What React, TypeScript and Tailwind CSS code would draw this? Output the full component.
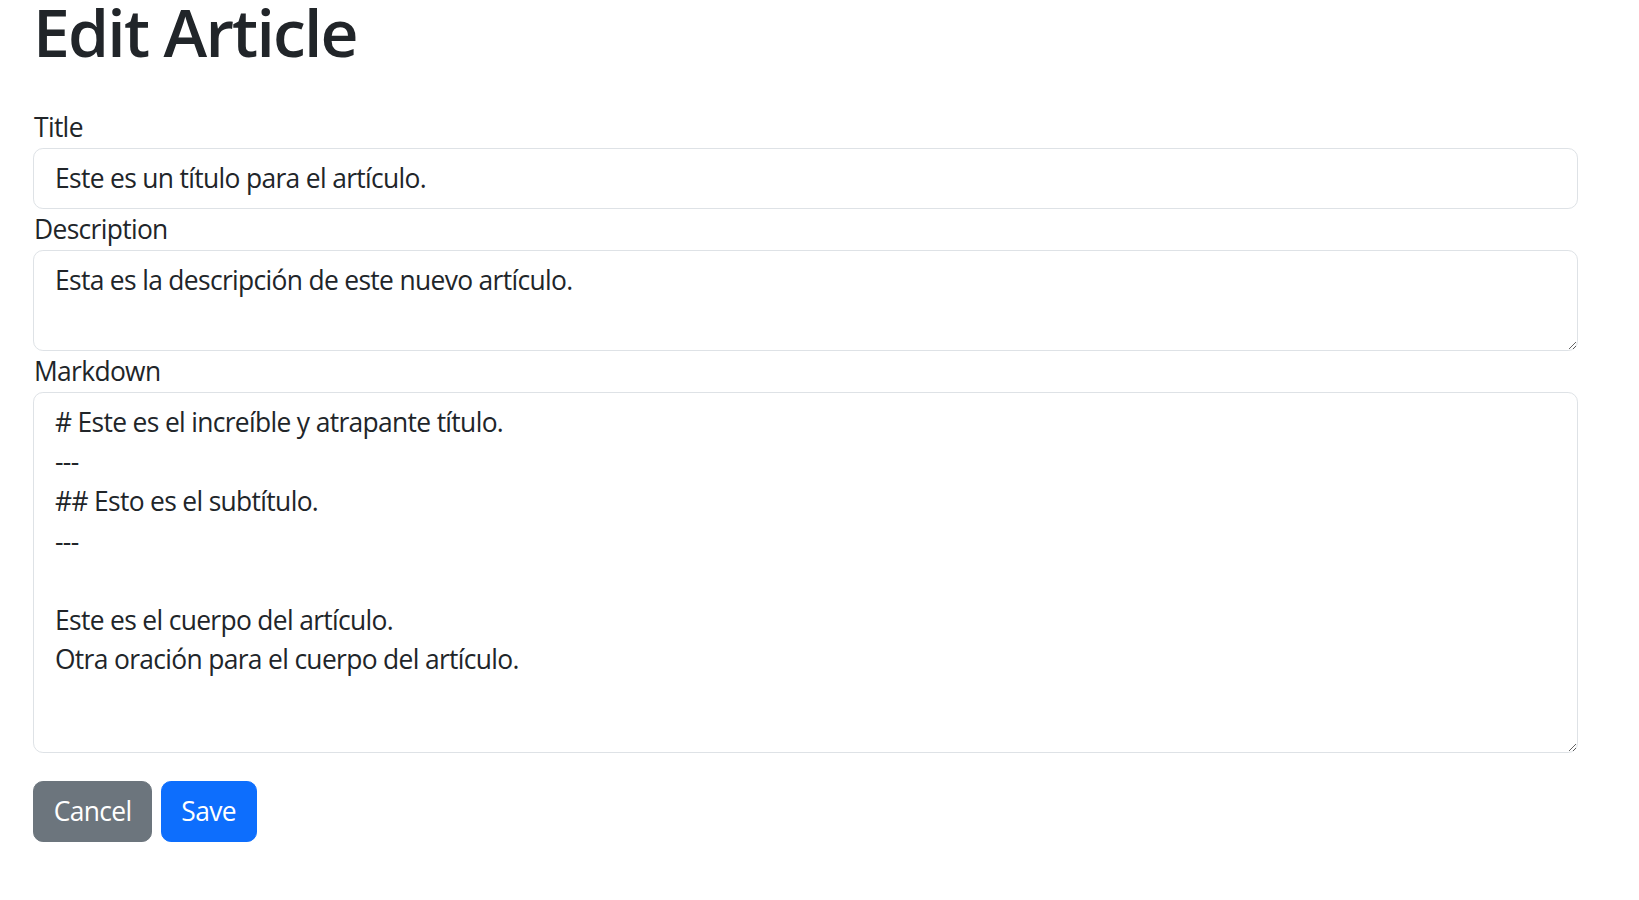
import React from "react";

const markdown = `# Este es el increíble y atrapante título.
---
## Esto es el subtítulo.
---

Este es el cuerpo del artículo.
Otra oración para el cuerpo del artículo.`;

const fieldClass =
  "block w-full border border-[#dee2e6] rounded-[9.9px] bg-white pl-[21px] pr-[19.8px] py-[9.9px] text-[26.4px] leading-[39.6px] tracking-[-0.66px] text-[#212529] outline-none";

const labelClass =
  "block pl-[1px] text-[26.4px] leading-[40.8px] tracking-[-0.66px]";

const btnClass =
  "h-[61.3px] rounded-[9.9px] border px-[19.8px] text-[26.4px] leading-[39.6px] tracking-[-0.66px] text-white";

const EditArticle = () => {
  return (
    <div
      className="min-h-screen bg-white text-[#212529]"
      style={{ fontFamily: '"Open Sans", "Noto Sans", sans-serif' }}
    >
      <div className="ml-[33px] w-[1545px]">
        <h1 className="mb-[44.9px] text-[66px] leading-[62px] font-semibold tracking-[-1.8px]">
          Edit Article
        </h1>
        <form onSubmit={(e) => e.preventDefault()}>
          <label className={labelClass}>Title</label>
          <input
            className={fieldClass + " h-[61.6px]"}
            defaultValue="Este es un título para el artículo."
          />
          <label className={labelClass}>Description</label>
          <textarea
            className={fieldClass + " h-[101px]"}
            defaultValue="Esta es la descripción de este nuevo artículo."
          />
          <label className={labelClass}>Markdown</label>
          <textarea
            className={fieldClass + " h-[361px]"}
            defaultValue={markdown}
          />
          <div className="mt-[28.1px] flex gap-[8.3px]">
            <button
              type="button"
              className={btnClass + " border-[#6c757d] bg-[#6c757d]"}
            >
              Cancel
            </button>
            <button
              type="submit"
              className={btnClass + " border-[#0d6efd] bg-[#0d6efd]"}
            >
              Save
            </button>
          </div>
        </form>
      </div>
    </div>
  );
};

export default function App() {
  return <EditArticle />;
}
